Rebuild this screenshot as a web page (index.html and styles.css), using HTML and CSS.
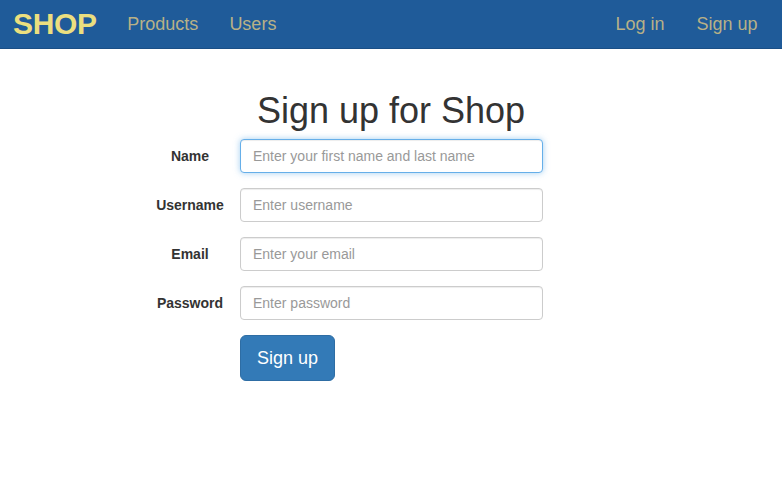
FILE: index.html
```html
<!DOCTYPE html>
<html>
<head>
<meta charset="utf-8">
<link rel="stylesheet" href="styles.css">
</head>
<body>
<nav class="navbar">
  <div class="nav-left">
    <a class="brand" href="#">SHOP</a>
    <a class="nav-link" href="#">Products</a>
    <a class="nav-link" href="#">Users</a>
  </div>
  <div class="nav-right">
    <a class="nav-link" href="#">Log in</a>
    <a class="nav-link" href="#">Sign up</a>
  </div>
</nav>
<main class="page">
  <h1 class="title">Sign up for Shop</h1>
  <form class="form">
    <div class="row">
      <label class="label">Name</label>
      <input class="input focused" type="text" placeholder="Enter your first name and last name">
    </div>
    <div class="row">
      <label class="label">Username</label>
      <input class="input" type="text" placeholder="Enter username">
    </div>
    <div class="row">
      <label class="label">Email</label>
      <input class="input" type="email" placeholder="Enter your email">
    </div>
    <div class="row">
      <label class="label">Password</label>
      <input class="input" type="password" placeholder="Enter password">
    </div>
    <div class="row">
      <span class="label"></span>
      <button class="btn" type="button">Sign up</button>
    </div>
  </form>
</main>
</body>
</html>
```
FILE: styles.css
```css
* { box-sizing: border-box; }
html, body { margin: 0; padding: 0; }
body {
  font-family: "Liberation Sans", Arial, sans-serif;
  font-size: 14px;
  color: #333;
  background: #fff;
}
.navbar {
  height: 49px;
  background: #1f5b99;
  border-bottom: 1px solid #1a4f86;
  display: flex;
  justify-content: space-between;
  align-items: stretch;
}
.nav-left, .nav-right { display: flex; align-items: center; }
.nav-right { padding-right: 9px; }
.brand {
  font-size: 30px;
  font-weight: bold;
  color: #ebdf7f;
  text-decoration: none;
  padding: 0 15px 0 13px;
  letter-spacing: -0.3px;
  line-height: 46px;
}
.nav-link {
  font-size: 18px;
  color: #b8b187;
  text-decoration: none;
  padding: 0 15.5px;
  line-height: 46px;
}
.nav-right .nav-link:first-child { padding-right: 16.5px; }
.page { display: flex; flex-direction: column; }
.title {
  font-size: 36px;
  font-weight: 500;
  line-height: 1.1;
  margin: 42px 0 8px;
  text-align: center;
  color: #333;
}
.form {
  display: flex;
  flex-direction: column;
  gap: 15px;
  padding-left: 140px;
}
.row { display: flex; align-items: center; }
.label {
  width: 100px;
  text-align: center;
  font-weight: bold;
  font-size: 14px;
}
.input {
  width: 303px;
  height: 34px;
  padding: 6px 12px;
  font-family: inherit;
  font-size: 14px;
  color: #555;
  border: 1px solid #ccc;
  border-radius: 4px;
  box-shadow: inset 0 1px 1px rgba(0,0,0,.075);
  outline: none;
}
.input::placeholder { color: #999; }
.input.focused {
  border-color: #66afe9;
  box-shadow: inset 0 1px 1px rgba(0,0,0,.075), 0 0 6px rgba(102,175,233,.6);
}
.btn {
  font-family: inherit;
  font-size: 18px;
  line-height: 24px;
  padding: 10px 16px;
  color: #fff;
  background: #337ab7;
  border: 1px solid #2e6da4;
  border-radius: 6px;
  height: 46px;
  white-space: nowrap;
}
```
